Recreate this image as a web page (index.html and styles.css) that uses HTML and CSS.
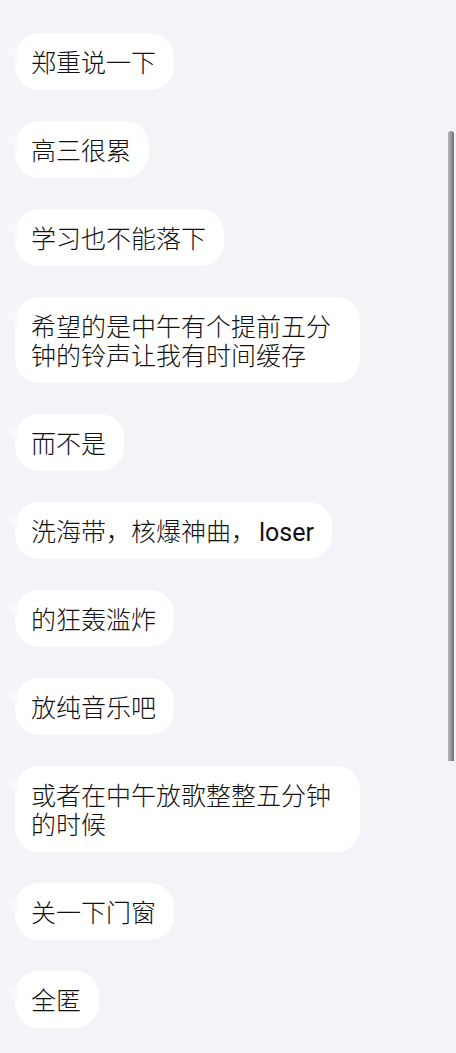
FILE: index.html
```html
<!DOCTYPE html>
<html lang="zh-CN">
<head>
<meta charset="utf-8">
<title>Chat</title>
<link rel="stylesheet" href="styles.css">
</head>
<body>
<div class="chat">
  <div class="msg"><div class="bubble">郑重说一下</div></div>
  <div class="msg"><div class="bubble">高三很累</div></div>
  <div class="msg"><div class="bubble">学习也不能落下</div></div>
  <div class="msg"><div class="bubble">希望的是中午有个提前五分钟的铃声让我有时间缓存</div></div>
  <div class="msg"><div class="bubble">而不是</div></div>
  <div class="msg"><div class="bubble">洗海带，核爆神曲，<span class="latin">loser</span></div></div>
  <div class="msg"><div class="bubble">的狂轰滥炸</div></div>
  <div class="msg"><div class="bubble">放纯音乐吧</div></div>
  <div class="msg"><div class="bubble">或者在中午放歌整整五分钟的时候</div></div>
  <div class="msg"><div class="bubble">关一下门窗</div></div>
  <div class="msg"><div class="bubble">全匿</div></div>
</div>
<div class="scrollbar"></div>
</body>
</html>
```
FILE: styles.css
```css
html, body {
  margin: 0;
  padding: 0;
  background: #f3f4f8;
  height: 100%;
  overflow: hidden;
}
body {
  font-family: "Noto Sans CJK SC", "Noto Sans", sans-serif;
  font-weight: 300;
  color: #111;
}
.chat {
  display: flex;
  flex-direction: column;
  gap: 31px;
  padding: 33px 0 0 15px;
}
.msg {
  display: flex;
}
.bubble {
  position: relative;
  max-width: 345px;
  box-sizing: border-box;
  background: #fff;
  border-radius: 24px;
  padding: 14px 18px 14px 16px;
  font-size: 25px;
  line-height: 29px;
}
.latin {
  font-family: Roboto, "Noto Sans", sans-serif;
  font-weight: 400;
  line-height: 1;
  margin-left: 3px;
}
.bubble::before {
  content: "";
  position: absolute;
  left: -10px;
  top: 13px;
  width: 0;
  height: 0;
  border-top: 3px solid transparent;
  border-bottom: 13px solid transparent;
  border-right: 13px solid #f8f9fb;
}
.scrollbar {
  position: fixed;
  left: 448px;
  top: 131px;
  width: 6px;
  height: 630px;
  border-radius: 3px 3px 0 0;
  background: linear-gradient(to right, #b5b5b8 0, #9a9a9d 50%, #6e6e72 100%);
}
```
